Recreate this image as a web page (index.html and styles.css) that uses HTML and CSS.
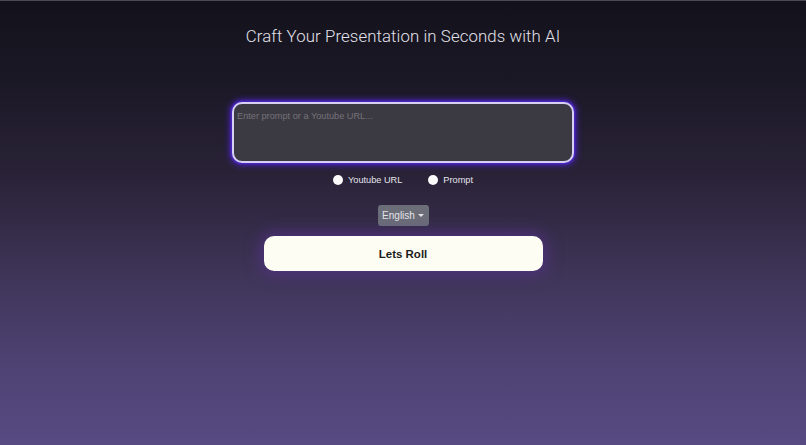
FILE: index.html
```html
<!DOCTYPE html>
<html>
<head>
<meta charset="utf-8">
<link rel="stylesheet" href="styles.css">
</head>
<body>
<main class="page">
  <h1 class="title">Craft Your Presentation in Seconds with AI</h1>
  <div class="form">
    <textarea class="prompt" placeholder="Enter prompt or a Youtube URL..."></textarea>
    <div class="radios">
      <label class="radio"><span class="dot"></span>Youtube URL</label>
      <label class="radio"><span class="dot"></span>Prompt</label>
    </div>
    <button class="lang">English<span class="caret"></span></button>
    <button class="go">Lets Roll</button>
  </div>
</main>
</body>
</html>
```

FILE: styles.css
```css
html, body {
  margin: 0;
  height: 100%;
}
body {
  background: linear-gradient(180deg, #13121b 0%, #1b1826 18%, #2a2338 40%, #3f3558 62%, #4e4273 82%, #574a82 100%);
  border-top: 1px solid #4a4a52;
  box-sizing: border-box;
  font-family: "Liberation Sans", Arial, sans-serif;
  overflow: hidden;
}
.page {
  display: flex;
  flex-direction: column;
  align-items: center;
}
.title {
  margin: 24px 0 0;
  font-family: Roboto, "Liberation Sans", sans-serif;
  font-weight: 300;
  font-size: 16.8px;
  line-height: 22px;
  color: #e4e2ea;
  letter-spacing: 0.1px;
}
.form {
  display: flex;
  flex-direction: column;
  align-items: center;
  margin-top: 55px;
}
.prompt {
  width: 342px;
  height: 61px;
  box-sizing: border-box;
  border: 2px solid #d6d0f2;
  border-radius: 10px;
  background: #3b3941;
  box-shadow: 0 0 6px 2px #4a22c8, 0 0 2px 1px #5b38e0;
  padding: 7px 3px;
  font-family: "Liberation Sans", Arial, sans-serif;
  font-size: 9.2px;
  color: #ddd;
  resize: none;
  outline: none;
}
.prompt::placeholder {
  color: #75737b;
}
.radios {
  display: flex;
  gap: 26px;
  margin-top: 10px;
  height: 14px;
  align-items: center;
}
.radio {
  display: flex;
  align-items: center;
  gap: 5px;
  font-size: 9.2px;
  color: #e6e4ec;
}
.dot {
  width: 10px;
  height: 10px;
  border-radius: 50%;
  background: #fafafa;
}
.lang {
  margin-top: 18px;
  width: 51px;
  height: 21px;
  border: none;
  border-radius: 3px;
  background: #6b6e78;
  color: #e4e4e8;
  font-family: "Liberation Sans", Arial, sans-serif;
  font-size: 10px;
  display: flex;
  align-items: center;
  justify-content: center;
  gap: 2px;
  padding: 0;
}
.caret {
  width: 0;
  height: 0;
  border-left: 3px solid transparent;
  border-right: 3px solid transparent;
  border-top: 3px solid #e4e4e8;
  margin-left: 1px;
}
.go {
  margin-top: 10px;
  width: 279px;
  height: 35px;
  border: none;
  border-radius: 10px;
  background: #fdfdf4;
  color: #1b1b1b;
  font-family: "Liberation Sans", Arial, sans-serif;
  font-weight: bold;
  font-size: 11.5px;
  box-shadow: 0 0 16px 3px rgba(95, 50, 160, 0.6);
}
```
